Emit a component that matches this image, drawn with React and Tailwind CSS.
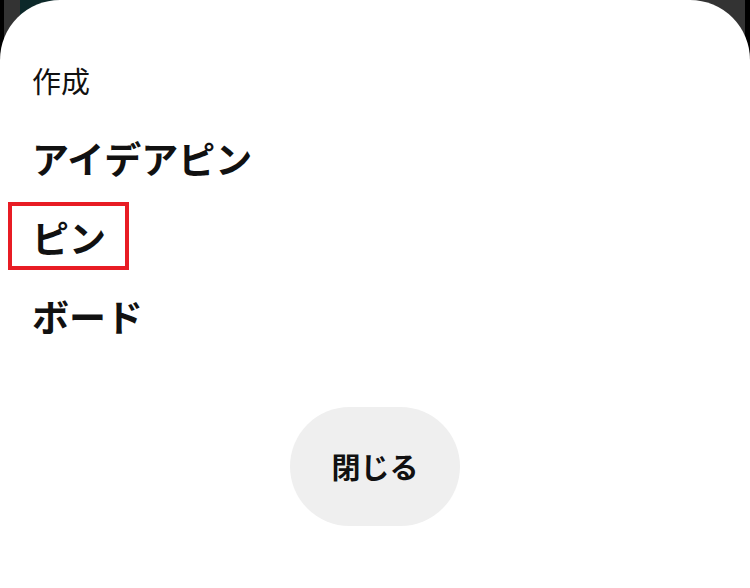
import React from "react";

export default function App() {
  const font = { fontFamily: '"Noto Sans CJK JP", "Noto Sans", sans-serif' };
  return (
    <div className="grid w-[750px] h-[588px] overflow-hidden bg-white" style={font}>
      {/* backdrop behind the sheet */}
      <div className="[grid-area:1/1] flex h-[120px]">
        <div className="w-[4px] bg-black" />
        <div className="w-[16px] bg-[#333333]" />
        <div className="w-[380px] bg-[#0c2829]" />
        <div className="flex-1 bg-[#333333]" />
        <div className="w-[5px] bg-black" />
      </div>

      {/* bottom sheet */}
      <div className="[grid-area:1/1] z-10 flex flex-col bg-white rounded-t-[60px] pt-[42px] px-[32px] text-[#111111]">
        <div className="h-[77px] flex items-center text-[29px] leading-none">作成</div>
        <div className="h-[79px] flex items-center text-[37px] font-bold leading-none">アイデアピン</div>
        <div className="h-[79px] flex items-center text-[37px] font-bold leading-none">
          <span className="relative">
            ピン
            <span className="absolute -left-[24px] -right-[23px] -top-[17px] -bottom-[14px] border-4 border-[#e81c24]" />
          </span>
        </div>
        <div className="h-[79px] flex items-center text-[37px] font-bold leading-none">ボード</div>
        <div className="mt-[51px] flex justify-center -ml-[32px] -mr-[32px]">
          <button className="w-[170px] h-[119px] rounded-full bg-[#efefef] text-[29px] font-bold text-[#111111] flex items-center justify-center">
            閉じる
          </button>
        </div>
      </div>
    </div>
  );
}
